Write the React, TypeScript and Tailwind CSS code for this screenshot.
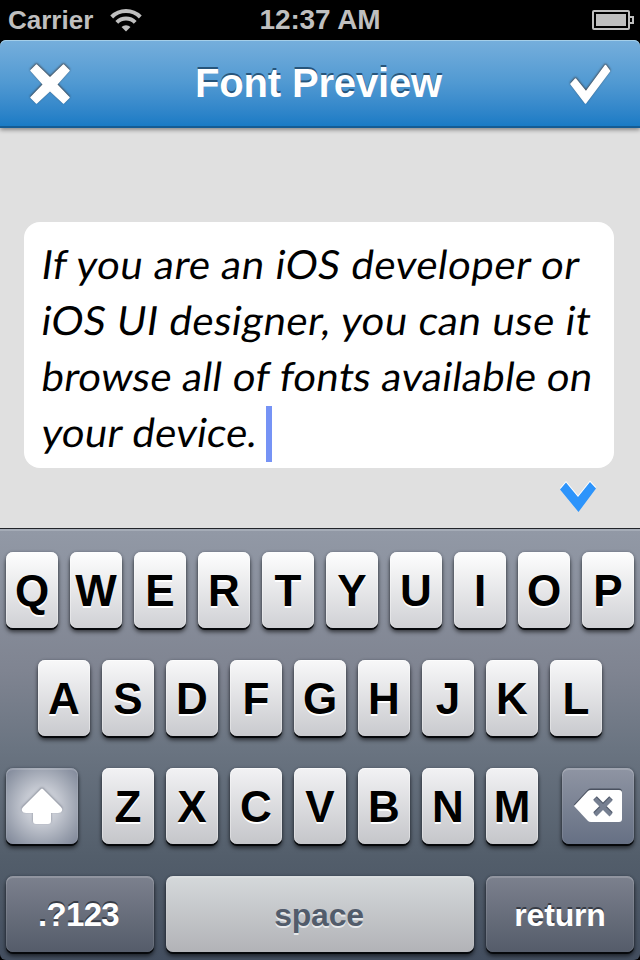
import type { ReactNode } from "react";

const LETTER =
  "flex h-[76px] w-[52px] items-center justify-center rounded-[7px] pt-px text-[44px] leading-none font-bold text-black [text-shadow:0_2px_0_#fff] shadow-[0_2px_0_#06080b,0_4px_4px_rgba(0,0,0,0.6),0_0_3px_rgba(30,35,50,0.35),inset_0_1px_0_rgba(255,255,255,0.6),inset_1px_0_0_rgba(255,255,255,0.35),inset_-1px_0_0_rgba(255,255,255,0.35)]";
const DARK =
  "flex h-[76px] items-center justify-center rounded-[7px] leading-none font-bold shadow-[0_2px_0_#06080b,0_4px_4px_rgba(0,0,0,0.6),0_0_3px_rgba(20,25,40,0.4),inset_0_2px_0_rgba(255,255,255,0.16),inset_1px_0_0_rgba(255,255,255,0.1),inset_-1px_0_0_rgba(255,255,255,0.1)]";

function Keys({ letters, tone }: { letters: string; tone: string }) {
  return (
    <div className="flex gap-3">
      {letters.split("").map((l) => (
        <button key={l} className={`${LETTER} ${tone}`}>
          {l}
        </button>
      ))}
    </div>
  );
}

function Line({ children, className, caret }: { children: ReactNode; className: string; caret?: boolean }) {
  return (
    <div className="flex h-14 items-center whitespace-pre">
      <span className={`-skew-x-[8deg] ${className}`}>{children}</span>
      {caret && <span className="mt-1 h-14 w-[6px] shrink-0 bg-[#7693f5]" />}
    </div>
  );
}

export default function App() {
  return (
    <div className="flex h-[960px] w-[640px] flex-col overflow-hidden bg-black font-['Liberation_Sans',Arial,sans-serif]">
      <header className="grid h-10 grid-cols-3 items-center bg-black font-bold text-[#bfbfbf]">
        <div className="flex items-center pl-2">
          <span className="text-[26px] leading-10">Carrier</span>
          <svg className="ml-[17px] h-6 w-8" viewBox="0 0 32 24" fill="none" stroke="#bfbfbf">
            <path d="M1.700 9a20.200 20.200 0 0 1 28.600 0" strokeWidth="4" />
            <path d="M6.800 14.400a13 13 0 0 1 18.400 0" strokeWidth="4" />
            <path d="M11.500 19a6.400 6.400 0 0 1 9 0L16 23.500Z" fill="#bfbfbf" stroke="none" />
          </svg>
        </div>
        <div className="text-center text-[28px] leading-10 tracking-[-0.1px] whitespace-nowrap">12:37 AM</div>
        <div className="flex justify-end pr-[6px]">
          <svg className="h-5 w-[42px]" viewBox="0 0 42 20" fill="none" stroke="#bfbfbf" strokeWidth="2">
            <rect x="1" y="1" width="36" height="18" rx="1" />
            <path d="M38 7h3v6h-3" />
            <rect x="4" y="4" width="30" height="12" fill="#bfbfbf" stroke="none" />
          </svg>
        </div>
      </header>

      <nav className="relative z-10 flex h-[88px] shrink-0 items-center justify-between rounded-t-[6px] border-b-2 border-[#145c94] bg-linear-to-b from-[#76afdc] via-[#5099d2] to-[#197bc5] px-[30px] shadow-[0_2px_4px_rgba(0,0,0,0.4),inset_0_1px_0_#a5cfe9]">
        <svg className="mt-[2px] h-10 w-10 overflow-visible [filter:drop-shadow(0_-1px_1px_rgba(60,50,45,0.9))]" viewBox="0 0 40 40">
          <path d="M1 6.500 6.500 1 20 14 33.500 1 39 6.500 26.500 20.500 39 33.500 33.500 39 20 26.500 6.500 39 1 33.500 13.500 20.500Z" fill="#fff" stroke="#fff" strokeWidth="1.500" strokeLinejoin="round" />
        </svg>
        <h1 className="pr-[3px] text-[40px] leading-none font-bold tracking-[-0.15px] text-white [text-shadow:0_-2px_0_#27557b]">Font Preview</h1>
        <svg className="mt-[2px] h-10 w-10 overflow-visible [filter:drop-shadow(0_-1px_1px_rgba(60,50,45,0.9))]" viewBox="0 0 40 40">
          <path d="M1 20 5.500 15 16 28 35.500 1.500 39.500 7 15.500 39Z" fill="#fff" stroke="#fff" strokeWidth="1.500" strokeLinejoin="round" />
        </svg>
      </nav>

      <main className="-mt-1 flex h-[404px] shrink-0 flex-col bg-[#e0e0e0] px-6 pt-[98px]">
        <div className="h-[246px] w-[590px] rounded-[16px] bg-white pt-[14px] pl-[18px] font-['Lato',sans-serif] text-[40px] leading-[56px] text-black">
          <Line className="tracking-[0.6px]">If you are an iOS developer or</Line>
          <Line className="tracking-[0.56px]">iOS UI designer, you can use it</Line>
          <Line className="tracking-[0.35px]">browse all of fonts available on</Line>
          <Line className="w-[224px] tracking-[0.35px]" caret>
            your device.
          </Line>
        </div>
        <div className="flex justify-end pt-[14px] pr-[20px]">
          <svg className="h-[30px] w-9 overflow-visible" viewBox="0 0 36 30">
            <path d="M0 7.500 6 .500 18 15 30 0 36 6.500 18.500 30Z" fill="#fff" transform="translate(0 -1.500)" />
            <path d="M0 7.500 6 .500 18 15 30 0 36 6.500 18.500 30Z" fill="#2d94fb" />
          </svg>
        </div>
      </main>

      <section className="flex h-[432px] shrink-0 flex-col items-center gap-8 rounded-b-[6px] border-t border-[#22252a] bg-[linear-gradient(#9299a6,#7f8491_33%,#6a7481_51%,#535e6b_76%,#434e5f)] pt-[23px] shadow-[inset_0_2px_0_#a5acb7]">
        <Keys letters="QWERTYUIOP" tone="bg-linear-to-b from-[#fefefe] to-[#d0d1d5]" />
        <Keys letters="ASDFGHJKL" tone="bg-linear-to-b from-[#f8f8f9] to-[#c9cace]" />
        <div className="flex w-[628px] justify-between">
          <button className={`${DARK} w-[72px] bg-[radial-gradient(ellipse_at_50%_50%,#e0e2e8_0%,#c4c8d1_35%,#969dab_75%,#7c8496_100%)]`}>
            <svg className="h-9 w-10 overflow-visible [filter:drop-shadow(0_-1px_1px_rgba(80,85,100,0.6))]" viewBox="0 0 40 36">
              <path d="M19 1Q20 0 21 1L39 19Q41 21 40 23 39 25 36 25H29V33Q29 36 26 36H14Q11 36 11 33V25H4Q1 25 0 23-1 21 1 19Z" fill="#fff" />
            </svg>
          </button>
          <Keys letters="ZXCVBNM" tone="bg-linear-to-b from-[#f2f2f4] to-[#c5c6ca]" />
          <button className={`${DARK} w-[72px] bg-linear-to-b from-[#8f95a3] to-[#667084]`}>
            <svg className="h-8 w-12 overflow-visible" viewBox="0 0 48 32">
              <path d="M0 16 14 1Q15 0 17 0H45Q48 0 48 3V29Q48 32 45 32H17Q15 32 14 31Z" fill="#49505f" transform="translate(0 -1.500)" />
              <path d="M0 16 14 1Q15 0 17 0H45Q48 0 48 3V29Q48 32 45 32H17Q15 32 14 31Z" fill="#fff" />
              <path d="m21 8 16 16m0-16L21 24" stroke="#515a6b" strokeWidth="5" />
              <path d="m21 9 16 16m0-16L21 25" stroke="#767f91" strokeWidth="4" />
            </svg>
          </button>
        </div>
        <div className="flex gap-3">
          <button className={`${DARK} w-[148px] bg-linear-to-b from-[#7c818e] to-[#555c6a] pr-[3px] text-[33px] tracking-[-0.7px] text-white [text-shadow:0_-2px_0_#373c46]`}>.?123</button>
          <button className={`${DARK} w-[308px] bg-linear-to-b from-[#d5d9db] to-[#b2b3b7] pt-[2px] pr-[2px] text-[32px] tracking-[-0.2px] text-[#525c6b] [text-shadow:0_2px_0_#e8eaec]`}>space</button>
          <button className={`${DARK} w-[148px] bg-linear-to-b from-[#7c818e] to-[#555c6a] pt-px text-[32px] tracking-[-0.2px] text-white [text-shadow:0_-2px_0_#373c46]`}>return</button>
        </div>
      </section>
    </div>
  );
}
